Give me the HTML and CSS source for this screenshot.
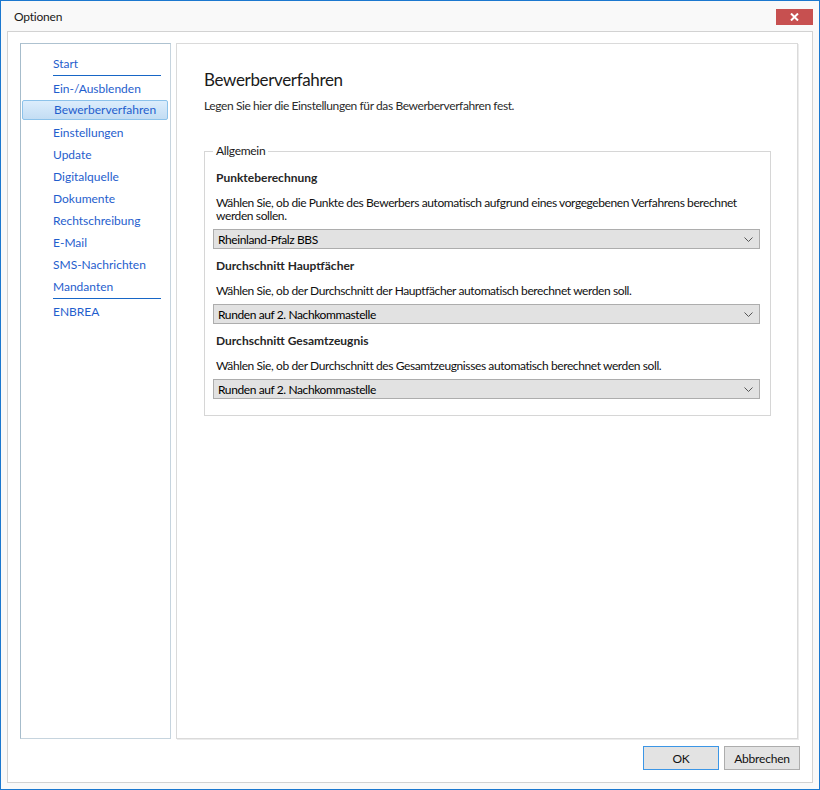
FILE: index.html
```html
<!DOCTYPE html>
<html lang="de">
<head>
<meta charset="utf-8">
<title>Optionen</title>
<link rel="stylesheet" href="styles.css">
</head>
<body>
<div class="window">
  <div class="titlebar">
    <span class="title">Optionen</span>
    <button class="close" aria-label="Schließen">
      <svg width="9" height="8" viewBox="0 0 9 8"><path d="M1 0.5 L8 7.5 M8 0.5 L1 7.5" stroke="#fff" stroke-width="2" fill="none"/></svg>
    </button>
  </div>
  <div class="panel">
    <div class="main">
      <nav class="nav">
        <ul class="nav-list">
          <li class="nav-item sep">Start</li>
          <li class="nav-item">Ein-/Ausblenden</li>
          <li class="nav-item active">Bewerberverfahren</li>
          <li class="nav-item">Einstellungen</li>
          <li class="nav-item">Update</li>
          <li class="nav-item">Digitalquelle</li>
          <li class="nav-item">Dokumente</li>
          <li class="nav-item">Rechtschreibung</li>
          <li class="nav-item">E-Mail</li>
          <li class="nav-item">SMS-Nachrichten</li>
          <li class="nav-item sep">Mandanten</li>
          <li class="nav-item">ENBREA</li>
        </ul>
      </nav>
      <section class="content">
        <h1 class="page-title">Bewerberverfahren</h1>
        <p class="lead">Legen Sie hier die Einstellungen für das Bewerberverfahren fest.</p>
        <fieldset class="group">
          <legend class="group-label">Allgemein</legend>
          <div class="field">
            <h2 class="field-title">Punkteberechnung</h2>
            <p class="field-desc">Wählen Sie, ob die Punkte des Bewerbers automatisch aufgrund eines vorgegebenen Verfahrens berechnet werden sollen.</p>
            <div class="select"><span>Rheinland-Pfalz BBS</span><svg class="chev" width="9" height="5" viewBox="0 0 9 5"><path d="M0.5 0.5 L4.5 4.5 L8.5 0.5" stroke="#555" stroke-width="1" fill="none"/></svg></div>
          </div>
          <div class="field">
            <h2 class="field-title">Durchschnitt Hauptfächer</h2>
            <p class="field-desc">Wählen Sie, ob der Durchschnitt der Hauptfächer automatisch berechnet werden soll.</p>
            <div class="select"><span>Runden auf 2. Nachkommastelle</span><svg class="chev" width="9" height="5" viewBox="0 0 9 5"><path d="M0.5 0.5 L4.5 4.5 L8.5 0.5" stroke="#555" stroke-width="1" fill="none"/></svg></div>
          </div>
          <div class="field">
            <h2 class="field-title">Durchschnitt Gesamtzeugnis</h2>
            <p class="field-desc">Wählen Sie, ob der Durchschnitt des Gesamtzeugnisses automatisch berechnet werden soll.</p>
            <div class="select"><span>Runden auf 2. Nachkommastelle</span><svg class="chev" width="9" height="5" viewBox="0 0 9 5"><path d="M0.5 0.5 L4.5 4.5 L8.5 0.5" stroke="#555" stroke-width="1" fill="none"/></svg></div>
          </div>
        </fieldset>
      </section>
    </div>
    <div class="buttons">
      <button class="btn default">OK</button>
      <button class="btn">Abbrechen</button>
    </div>
  </div>
</div>
</body>
</html>
```
FILE: styles.css
```css
* { box-sizing: border-box; }
html, body { margin: 0; padding: 0; }
body {
  width: 820px;
  height: 790px;
  font-family: "Segoe UI", Lato, "Noto Sans", sans-serif;
  font-size: 12px;
  color: #000;
}
.window {
  width: 820px;
  height: 790px;
  border: 1px solid #1b78cf;
  background: #f9f9f9;
  display: flex;
  flex-direction: column;
  padding: 0 6px 6px 6px;
}
.titlebar {
  height: 30px;
  display: flex;
  align-items: center;
  justify-content: space-between;
  margin: 0 -6px;
  padding: 0 6px 0 13px;
}
.title { font-size: 12px; color: #1a1a1a; padding-top: 1px; letter-spacing: -0.2px; }
.close {
  width: 37px;
  height: 16px;
  border: 0;
  padding: 0;
  margin-top: 2px;
  background: #c75050;
  display: flex;
  align-items: center;
  justify-content: center;
}
.panel {
  flex: 1;
  background: #fff;
  border: 1px solid #d2d2d2;
  padding: 11px 14px 12px 12px;
  display: flex;
  flex-direction: column;
  gap: 7px;
}
.main {
  flex: 1;
  display: grid;
  grid-template-columns: 151px 1fr;
  gap: 5px;
  min-height: 0;
}
.nav {
  border: 1px solid #c6d4de;
  border-left-color: #a6bccb;
  border-top-color: #aec2d0;
}
.nav-list {
  list-style: none;
  margin: 0;
  padding: 9px 0 0 0;
}
.nav-item {
  color: #1f5ecd;
  line-height: 22px;
  padding-left: 32px;
}
.nav-item.sep::after {
  content: "";
  display: block;
  width: 108px;
  height: 1px;
  background: #1766c6;
  margin-bottom: 2px;
}
.nav-item.active {
  height: 20px;
  line-height: 18px;
  margin: 0 2px 2px 1px;
  padding-left: 31px;
  border: 1px solid #8cc2ea;
  border-radius: 2px;
  background: linear-gradient(#dcedfc, #c3ddf3);
}
.content {
  border: 1px solid #dadada;
  box-shadow: 1px 1px 0 #ececec;
  padding: 24px 26px 0 27px;
}
.page-title {
  margin: 0;
  font-size: 17px;
  font-weight: normal;
  line-height: 24px;
  letter-spacing: -0.35px;
  color: #1a1a1a;
}
.lead {
  margin: 6px 0 0 0;
  line-height: 16px;
  letter-spacing: -0.4px;
  color: #2b2b2b;
}
.group {
  margin: 29px 0 0 0;
  border: 1px solid #d6d6d6;
  padding: 11px 10px 16px 8px;
  min-width: 0;
}
.group-label {
  padding: 0 3px;
  line-height: 16px;
  letter-spacing: -0.3px;
  color: #1a1a1a;
}
.field + .field { margin-top: 9px; }
.field-title {
  margin: 0;
  padding-left: 3px;
  font-size: 12px;
  font-weight: bold;
  line-height: 16px;
  color: #262626;
}
.field-desc {
  margin: 10px 0 0 0;
  padding-left: 3px;
  line-height: 13px;
  letter-spacing: -0.4px;
  color: #111;
}
.select {
  margin-top: 7px;
  height: 20px;
  border: 1px solid #adadad;
  background: #e2e2e2;
  display: flex;
  align-items: center;
  justify-content: space-between;
  padding: 0 6px 0 4px;
  letter-spacing: -0.4px;
}
.chev { display: block; }
.buttons {
  display: flex;
  justify-content: flex-end;
  gap: 5px;
  margin-right: -2px;
}
.btn {
  width: 76px;
  height: 24px;
  font-family: inherit;
  font-size: 12px;
  color: #111;
  background: #e3e3e3;
  border: 1px solid #adadad;
  padding: 0;
  letter-spacing: -0.2px;
}
.btn.default { border-color: #3c96e6; }
```
